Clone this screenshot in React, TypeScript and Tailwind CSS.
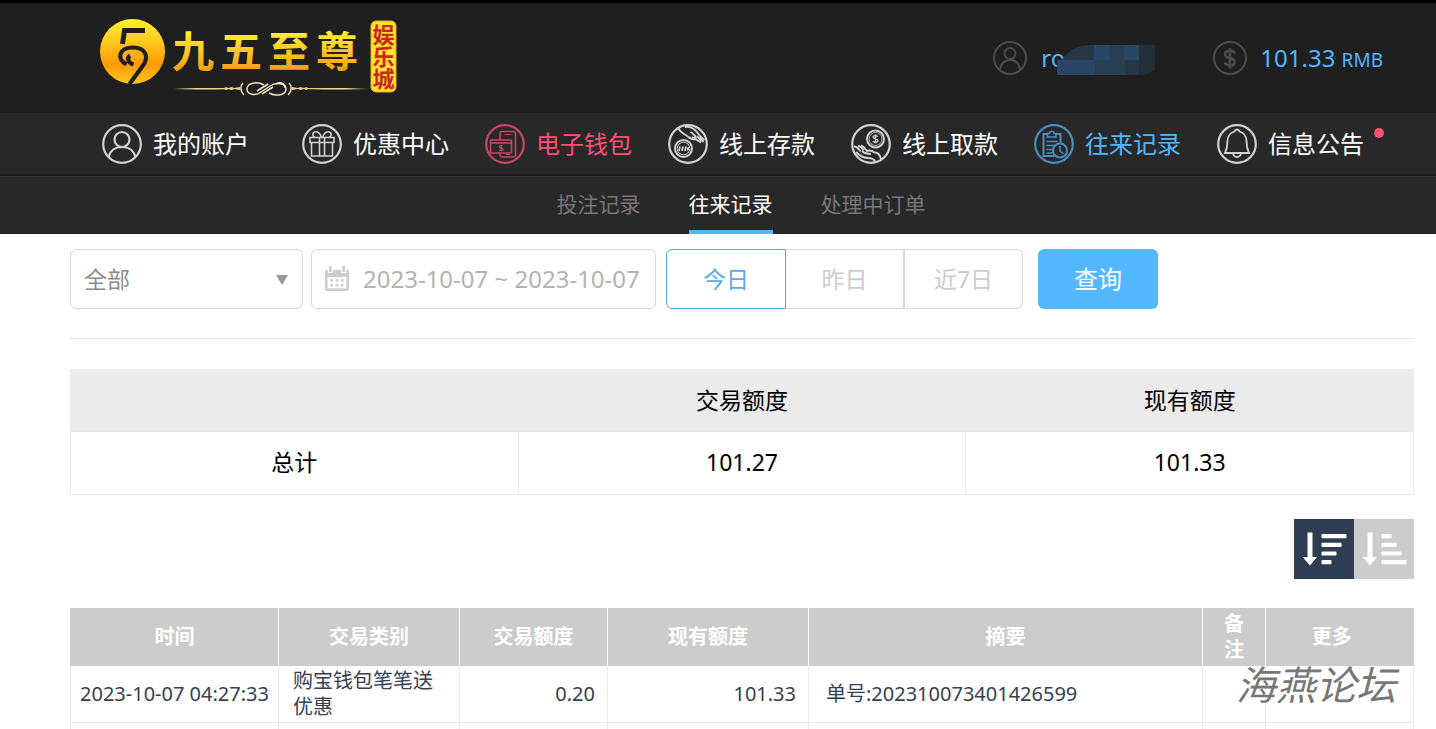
import { useState } from 'react';
import type { ReactNode } from 'react';

const BODY_FONT = "font-['Noto_Sans','Noto_Sans_CJK_SC',sans-serif]";

function IconRing({ children }: { children: ReactNode }) {
  return (
    <svg className="h-10 w-10 shrink-0" viewBox="0 0 40 40" fill="none" stroke="currentColor" strokeWidth="1.6" aria-hidden="true">
      <circle cx="20" cy="20" r="18.8" strokeWidth="2.2" />
      {children}
    </svg>
  );
}

function UserIcon() {
  return (
    <IconRing>
      <circle cx="20" cy="15.5" r="7.5" strokeWidth="2.2" />
      <path d="M6.5 33c1.5-6 6.5-10 13.5-10s12 4 13.5 10" strokeWidth="2.2" />
    </IconRing>
  );
}

function GiftIcon() {
  return (
    <IconRing>
      <path d="M8 13.5h24v5H8zM9.5 18.5h21V32h-21zM17.5 13.5V32M22.5 13.5V32" />
      <path d="M19.5 13.5c-1-4-4-6.5-7-5.5-2.500 1-2 4 0 5.500M20.500 13.500c1-4 4-6.500 7-5.500 2.500 1 2 4 0 5.500" />
    </IconRing>
  );
}

function WalletIcon() {
  return (
    <IconRing>
      <path d="M15 16V9.5a2 2 0 0 1 2-2h11.5a2 2 0 0 1 2 2V31a2 2 0 0 1-2 2H17a2 2 0 0 1-2-2v-2" />
      <path d="M19.5 10.5h7M21 30.5h4" strokeWidth="1.2" />
      <rect x="5.5" y="16" width="21" height="13" rx="1" />
      <path d="M5.5 19h21" />
      <path d="M18 21.800c-2.500-.8-4 .2-3.500 1.300.4 1.200 3.500.8 3.500 2.200 0 1.500-2.500 1.500-4 .7M16.200 20.800v6.800" strokeWidth="1.2" />
    </IconRing>
  );
}

function DepositIcon() {
  return (
    <IconRing>
      <path d="M10 4c2.500 5 7 6 10.500 9 2 2 4.500 2.500 7.500 2.500l5 3M17 3c5-.5 9 1.500 11.500 4.500 2 3 4.500 6 8 8.500" strokeWidth="1.9" />
      <path d="M22.500 8c2 1 3.500 3 5.500 4.500M24 13c1.500 1 3 1 4.500.5M29 12l4.500 5.500M32 13l3.500 5" strokeWidth="1.9" />
      <circle cx="15.500" cy="24.500" r="8.500" strokeWidth="1.9" />
      <circle cx="15.500" cy="24.500" r="6.300" strokeWidth="1" />
      <path d="M11 27l1-4.500M14 27l1-4.500M17 27l1-4.500M19.500 26.500l1-3.500" strokeWidth="1.7" />
    </IconRing>
  );
}

function WithdrawIcon() {
  return (
    <IconRing>
      <circle cx="24.500" cy="15" r="8.500" strokeWidth="1.9" />
      <circle cx="24.500" cy="15" r="6.500" strokeWidth=".8" />
      <path d="M27 12.500c-2-1.500-5-1-5 .6 0 2 5 1.400 5 3.600 0 1.800-3.500 2-5.300.5M24.500 10.500v9" strokeWidth="1.4" />
      <path d="M3 22.500c2 0 4.500 2 6.500 5M7 22c2 0 4 2 5.500 4.500M10 21.500c3 1 4.500 3.500 6 5.500 2.500-1 5.500 0 7.500 1.500 4-.5 5.500 3 6.500 6.500M5 28c4 4 7 6 12 6 4 0 6 1 7.500 4M11 27c2 2 5 3 9 3" strokeWidth="1.9" />
    </IconRing>
  );
}

function RecordsIcon() {
  return (
    <IconRing>
      <path d="M20 32H9.500V10H14M21 10h5.500v9.500" strokeWidth="2" />
      <path d="M13.500 13V9.500h2c0-3 4.500-3 4.500 0h2V13zM12.500 17.500h11M12.500 21.500h8M12.500 25.500h6M12.500 29h6" />
      <circle cx="26" cy="26.500" r="7" strokeWidth="2" />
      <path d="M26 22v5l3.500 3" />
    </IconRing>
  );
}

function BellIcon() {
  return (
    <IconRing>
      <path d="M20 5.500c-1.500 0-2.200 1-2.500 2-5 1.500-7 5-7 9.500 0 5.500-.5 8-2.500 12h24c-2-4-2.500-6.500-2.500-12 0-4.500-2-8-7-9.500-.3-1-1-2-2.500-2zM16 29c.3 2.500 2 4 4 4s3.700-1.500 4-4" strokeWidth="1.8" />
    </IconRing>
  );
}

const navItems = [
  { label: '我的账户', icon: <UserIcon />, tone: 'text-white', iconTone: 'text-[#d2d2d2]', extra: 'mr-[17px]' },
  { label: '优惠中心', icon: <GiftIcon />, tone: 'text-white', iconTone: 'text-[#d2d2d2]' },
  { label: '电子钱包', icon: <WalletIcon />, tone: 'text-[#ff4f74]', iconTone: 'text-[#c94563]' },
  { label: '线上存款', icon: <DepositIcon />, tone: 'text-white', iconTone: 'text-[#d2d2d2]' },
  { label: '线上取款', icon: <WithdrawIcon />, tone: 'text-white', iconTone: 'text-[#d2d2d2]' },
  { label: '往来记录', icon: <RecordsIcon />, tone: 'text-[#53b6ff]', iconTone: 'text-[#488fc0]' },
  { label: '信息公告', icon: <BellIcon />, tone: 'text-white', iconTone: 'text-[#d2d2d2]', dot: true },
];

const subTabs = ['投注记录', '往来记录', '处理中订单'];

const ranges = ['今日', '昨日', '近7日'];

function Logo() {
  return (
    <a href="#" aria-label="九五至尊娱乐城" className="block">
      <svg className="h-[84px] w-[304px]" viewBox="0 0 304 84">
        <defs>
          <linearGradient id="gold" x1="0" y1="0" x2="0" y2="1">
            <stop offset="0" stopColor="#fff22e" />
            <stop offset=".35" stopColor="#ffc81f" />
            <stop offset=".7" stopColor="#ff9a05" />
            <stop offset="1" stopColor="#ffc81c" />
          </linearGradient>
          <linearGradient id="goldText" gradientUnits="userSpaceOnUse" x1="0" y1="18" x2="0" y2="60">
            <stop offset="0" stopColor="#fff22e" />
            <stop offset="1" stopColor="#f59a15" />
          </linearGradient>
          <linearGradient id="rule" x1="0" y1="0" x2="1" y2="0">
            <stop offset="0" stopColor="#efe0a0" stopOpacity="0" />
            <stop offset=".35" stopColor="#efe0a0" />
            <stop offset=".65" stopColor="#efe0a0" />
            <stop offset="1" stopColor="#efe0a0" stopOpacity="0" />
          </linearGradient>
        </defs>
        <circle cx="38.500" cy="38.500" r="32.500" fill="url(#gold)" />
        <path d="M51 17.500H30.500L28.500 31" fill="none" stroke="#1f1f1f" strokeWidth="5" />
        <path d="M32.500 51.500C22 46 25 34.500 39 34.500C52 34.500 55 44 49 52.500L35.500 71M39.500 51.500C34 50 32.500 45 36 42.500" fill="none" stroke="#1f1f1f" strokeWidth="4.2" />
        <g fill="url(#goldText)" className="font-['Noto_Sans_CJK_SC',sans-serif] text-[42px] font-bold">
          <text x="78" y="54">九</text>
          <text x="126" y="54">五</text>
          <text x="174" y="54">至</text>
          <text x="222" y="54">尊</text>
        </g>
        <rect x="80" y="75" width="64" height="1.500" fill="url(#rule)" />
        <rect x="208" y="75" width="66" height="1.500" fill="url(#rule)" />
        <path d="M80 76l50-1 2-1 2 1 4-1 2 1 6-1v3l-6-1-2 1-4-1-2 1-2-1zM264 76l-50-1-2-1-2 1-4-1-2 1-6-1v3l6-1 2 1 4-1 2 1 2-1z" fill="#e8d788" />
        <g fill="none" stroke="#eee5c0" strokeWidth="1.5">
          <path d="M149 70c-3 3-3 8 1 12M195 70c3 3 3 8-1 12" />
          <path d="M170 72c-7-4-17-2-17 4s9 7 14 3l9-6c6-4 16-3 16 3s-9 8-17 4" />
          <path d="M163 78l11-7M168 81l11-7M182 71c5-3 9 0 9 4" />
        </g>
        <rect x="277" y="8" width="25" height="71" rx="5" fill="#ffe22c" stroke="#e9a91b" />
        <text x="289.5" y="10.5" fill="#c9281c" className="font-['Noto_Sans_CJK_SC',sans-serif] text-[22px] font-bold [writing-mode:vertical-rl]">
          娱乐城
        </text>
      </svg>
    </a>
  );
}

function Header() {
  return (
    <header className="flex h-[113px] items-start justify-between border-t-3 border-black bg-[#1f1f1f] pt-[10px] pr-[53px] pl-[94px]">
      <Logo />
      <div className="flex items-center pt-7 text-[#53b6ff]">
        <svg className="h-[34px] w-[34px] text-[#4d4d4d]" viewBox="0 0 34 34" fill="none" stroke="currentColor" strokeWidth="2" aria-hidden="true">
          <circle cx="17" cy="17" r="16" />
          <circle cx="17" cy="12.500" r="5.500" />
          <path d="M7 28.500c1-6 4.500-9.500 10-9.500s9 3.500 10 9.500" />
        </svg>
        <div className="relative ml-[14px] w-[115px] text-2xl">
          ro
          <svg className="absolute top-0.5 left-4 h-[31px] w-[98px]" viewBox="0 0 98 31" aria-hidden="true">
            <path d="M4 16Q16 1 32 1H98V26Q90 31 82 31H0V16z" fill="#263645" />
            <path d="M37 1h15v15H37zM67 1h15v15H67zM0 16h38v15H0z" fill="#294666" />
            <path d="M52 1h15v15H52zM38 16h30v15H38z" fill="#283e51" />
            <path d="M82 1h16v25q-8 5-16 5z" fill="#232e38" />
          </svg>
        </div>
        <svg className="ml-[57px] h-[34px] w-[34px] text-[#4d4d4d]" viewBox="0 0 34 34" fill="none" stroke="currentColor" strokeWidth="2" aria-hidden="true">
          <circle cx="17" cy="17" r="16" />
          <path d="M22 12.500c-1-2-3-2.800-5-2.800-6.500 0-6.500 6.300-.5 7.300 7 1.200 6.500 7.500.5 7.500-2.500 0-4.500-1-5.500-3M17 7v20.500" strokeWidth="2.4" />
        </svg>
        <div className="ml-[13px] text-2xl">
          101.33 <span className="text-[19px]">RMB</span>
        </div>
      </div>
    </header>
  );
}

function MainNav() {
  return (
    <nav className="flex h-[63px] items-center gap-9 border-b-2 border-[#191919] bg-[#282828] pl-[102px]">
      {navItems.map((item) => (
        <a key={item.label} href="#" className={`relative flex items-center gap-[11px] text-2xl whitespace-nowrap ${item.tone} ${item.extra ?? ''}`}>
          <span className={item.iconTone}>{item.icon}</span>
          {item.label}
          {item.dot && <span className="absolute top-1 -right-5 h-[10px] w-[10px] rounded-full bg-[#ff4f74]" />}
        </a>
      ))}
    </nav>
  );
}

function SortIcon({ widths }: { widths: number[] }) {
  return (
    <svg className="h-[60px] w-[60px]" viewBox="0 0 60 60" fill="#fff" aria-hidden="true">
      <path d="M13.500 13.500h5V38H23l-7 8.500L8.500 38h5z" />
      {widths.map((width, i) => (
        <rect key={i} x="27.500" y={15 + i * 8.7} width={width} height="4.200" rx="1" />
      ))}
    </svg>
  );
}

export default function App() {
  const [tab, setTab] = useState('往来记录');
  const [range, setRange] = useState('今日');

  return (
    <div className={`min-h-screen bg-white ${BODY_FONT}`}>
      <Header />
      <MainNav />
      <div className="flex h-[58px] justify-center gap-12 border-t border-[#303030] bg-[#282828] pl-[46px]">
        {subTabs.map((label) => (
          <button
            key={label}
            onClick={() => setTab(label)}
            className={`border-b-4 pt-0.5 text-[21px] ${tab === label ? 'border-[#53b6ff] text-white' : 'border-transparent text-[#777]'}`}>
            {label}
          </button>
        ))}
      </div>

      <main className="pr-[22px] pl-[70px]">
        <form className="flex border-b border-[#e5e5e5] pt-[15px] pb-[29px]" onSubmit={(e) => e.preventDefault()}>
          <div className="relative w-[233px]">
            <select aria-label="交易类别" className="h-[60px] w-full appearance-none rounded-md border border-[#d8d8d8] bg-white px-[13px] text-[23px] text-[#8c8c8c]">
              <option>全部</option>
            </select>
            <svg className="pointer-events-none absolute top-[26px] right-[15px] h-[10px] w-3" viewBox="0 0 12 10" aria-hidden="true">
              <path d="M0 0h12L6 10z" fill="#999" />
            </svg>
          </div>
          <label className="ml-2 flex h-[60px] w-[345px] items-center gap-[13px] rounded-md border border-[#d8d8d8] pl-3">
            <svg className="h-[26px] w-[26px] shrink-0" viewBox="0 0 26 26" aria-hidden="true">
              <path d="M1 4h24v19a2 2 0 0 1-2 2H3a2 2 0 0 1-2-2z" fill="#ccc" />
              <path d="M3.500 11h19V22.500h-19z" fill="#fff" />
              <path d="M3.800 0h5v7h-5zM17.200 0h5v7h-5z" fill="#fff" />
              <path d="M5 0h2.600v6H5zM18.400 0H21v6h-2.600z" fill="#ccc" />
              <path d="M6.500 13H9v2.500H6.500zM11.700 13h2.500v2.500h-2.500zM17 13h2.500v2.500H17zM6.500 18H9v2.500H6.500zM11.700 18h2.500v2.500h-2.500zM17 18h2.500v2.500H17z" fill="#ccc" />
            </svg>
            <input type="text" aria-label="日期" defaultValue="2023-10-07 ~ 2023-10-07" className="w-full min-w-0 text-2xl text-[#b3b3b3] outline-none" />
          </label>
          <div className="ml-[10px] flex">
            {ranges.map((label) => (
              <button
                key={label}
                type="button"
                onClick={() => setRange(label)}
                className={`h-[60px] w-[118px] border text-[23px] first:w-[120px] first:rounded-l-md last:w-[119px] last:rounded-r-md ${
                  range === label ? 'border-[#53b0de] text-[#5aabec]' : 'border-[#d8d8d8] text-[#ccc] not-last:border-l-0'
                }`}>
                {label}
              </button>
            ))}
          </div>
          <button type="submit" className="ml-[15px] h-[60px] w-[120px] rounded-md bg-[#54b8ff] text-2xl text-white">
            查询
          </button>
        </form>

        <table className="mt-[30px] w-full table-fixed border-collapse text-center text-[23px] text-black">
          <thead>
            <tr className="h-[62px] bg-[#ebebeb]">
              <td className="border-l border-[#ebebeb]"></td>
              <th scope="col" className="font-normal">交易额度</th>
              <th scope="col" className="font-normal">现有额度</th>
            </tr>
          </thead>
          <tbody>
            <tr className="h-[63px]">
              <th scope="row" className="border border-[#e8e8e8] font-normal">总计</th>
              <td className="border border-[#e8e8e8]">101.27</td>
              <td className="border border-[#e8e8e8]">101.33</td>
            </tr>
          </tbody>
        </table>

        <div className="mt-6 flex justify-end">
          <button aria-label="降序" className="bg-[#2f3d52]">
            <SortIcon widths={[25, 20, 15, 10]} />
          </button>
          <button aria-label="升序" className="bg-[#ccc]">
            <SortIcon widths={[10, 15, 20, 25]} />
          </button>
        </div>

        <div className="relative mt-[29px]">
          <table className="w-full table-fixed border-collapse text-xl leading-[26px] text-[#354052]">
            <colgroup>
              <col className="w-[208px]" />
              <col className="w-[181px]" />
              <col className="w-[148px]" />
              <col className="w-[201px]" />
              <col />
              <col className="w-[63px]" />
              <col className="w-[148px]" />
            </colgroup>
            <thead>
              <tr className="h-[58px] bg-[#ccc] text-white">
                <th className="border-x border-white border-l-[#ccc]">时间</th>
                <th className="border-r border-white">交易类别</th>
                <th className="border-r border-white">交易额度</th>
                <th className="border-r border-white">现有额度</th>
                <th className="border-r border-white">摘要</th>
                <th className="border-r border-white px-5">备注</th>
                <th className="pr-4">更多</th>
              </tr>
            </thead>
            <tbody>
              <tr className="h-[57px]">
                <td className="border border-t-0 border-[#e8e8e8] pl-[9px] whitespace-nowrap">2023-10-07 04:27:33</td>
                <td className="border border-t-0 border-[#e8e8e8] px-[14px]">购宝钱包笔笔送优惠</td>
                <td className="border border-t-0 border-[#e8e8e8] pr-3 text-right">0.20</td>
                <td className="border border-t-0 border-[#e8e8e8] pr-3 text-right">101.33</td>
                <td className="border border-t-0 border-[#e8e8e8] pl-[17px]">单号:202310073401426599</td>
                <td className="border border-t-0 border-[#e8e8e8]"></td>
                <td className="border border-t-0 border-[#e8e8e8]"></td>
              </tr>
              <tr className="h-[6px]">
                <td className="border-x border-[#e8e8e8]"></td>
                <td className="border-x border-[#e8e8e8]"></td>
                <td className="border-x border-[#e8e8e8]"></td>
                <td className="border-x border-[#e8e8e8]"></td>
                <td className="border-x border-[#e8e8e8]"></td>
                <td className="border-x border-[#e8e8e8]"></td>
                <td className="border-x border-[#e8e8e8]"></td>
              </tr>
            </tbody>
          </table>
          <div className="pointer-events-none absolute top-[57px] right-[18px] text-[40px] leading-[40px] text-[#777] italic">海燕论坛</div>
        </div>
      </main>
    </div>
  );
}
